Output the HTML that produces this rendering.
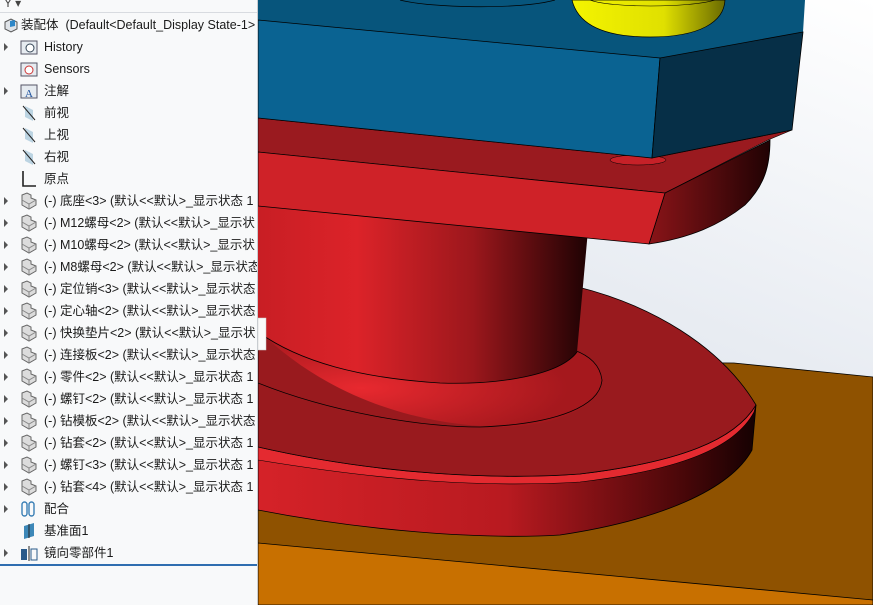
<!DOCTYPE html>
<html><head><meta charset="utf-8"><style>
*{margin:0;padding:0}
body{width:873px;height:605px;overflow:hidden;position:relative;background:#fff;font-family:"Liberation Sans","Noto Sans CJK SC",sans-serif}
#panel{position:absolute;left:0;top:0;width:257px;height:605px;background:#f8f9fa;overflow:hidden;border-right:1px solid #c8ccd0}
.row{position:absolute;left:0;height:22px;width:400px;font-size:12.5px;color:#1a1a1a;line-height:22px;white-space:nowrap}
.row .t{position:absolute;left:44px;top:0}
.row .a{position:absolute;left:4px;top:7px;width:0;height:0;border-top:4px solid transparent;border-bottom:4px solid transparent;border-left:4px solid #555}
.row svg{position:absolute;left:20px;top:2px}
#view{position:absolute;left:258px;top:0}
</style></head><body>
<div id="panel">
<div style="position:absolute;left:4px;top:-4px;font-size:12px;color:#444">Y ▾</div>
<div style="position:absolute;left:0;top:12px;width:257px;height:1px;background:#d8dbe0"></div>
<div class="row" style="top:14px"><svg width="18" height="18" style="left:2px"><path d="M3 6 L9 3 L15 6 L15 13 L9 16 L3 13Z" fill="#dfe3e8" stroke="#555"/><path d="M8 5 L13 4 L13 10 L8 11Z" fill="#2e87c8"/></svg><span class="t" style="left:21px">装配体&nbsp; (Default&lt;Default_Display State-1&gt;</span></div>

<div class="row" style="top:36px"><i class="a"></i><svg width="18" height="18"><rect x="1" y="3" width="16" height="13" fill="#e6ebf0" stroke="#556"/><circle cx="10" cy="10" r="4" fill="#fff" stroke="#345"/></svg><span class="t">History</span></div>
<div class="row" style="top:58px"><svg width="18" height="18"><rect x="1" y="3" width="16" height="13" fill="#e6ebf0" stroke="#556"/><circle cx="9" cy="10" r="4" fill="#fff" stroke="#c33"/></svg><span class="t">Sensors</span></div>
<div class="row" style="top:80px"><i class="a"></i><svg width="18" height="18"><rect x="1" y="3" width="16" height="13" fill="#e6ebf0" stroke="#556"/><text x="5" y="15" font-size="11" fill="#1b4f9c" font-family="Liberation Serif">A</text></svg><span class="t">注解</span></div>
<div class="row" style="top:102px"><svg width="18" height="18"><path d="M5 2 L13 6 L13 17 L5 13Z" fill="#bcd4e2"/><path d="M3 2 L15 16" stroke="#222"/></svg><span class="t">前视</span></div>
<div class="row" style="top:124px"><svg width="18" height="18"><path d="M5 2 L13 6 L13 17 L5 13Z" fill="#bcd4e2"/><path d="M3 2 L15 16" stroke="#222"/></svg><span class="t">上视</span></div>
<div class="row" style="top:146px"><svg width="18" height="18"><path d="M5 2 L13 6 L13 17 L5 13Z" fill="#bcd4e2"/><path d="M3 2 L15 16" stroke="#222"/></svg><span class="t">右视</span></div>
<div class="row" style="top:168px"><svg width="18" height="18"><path d="M3 1 L3 16 L16 16" stroke="#222" stroke-width="1.6" fill="none"/></svg><span class="t">原点</span></div>

<div class="row" style="top:190px"><i class="a"></i><svg width="18" height="18"><path d="M2 8 L2 13 L9 17 L16 13 L16 8 L11 6 L11 3 L7 1 L2 3Z" fill="#dcdcdc" stroke="#666"/><path d="M2 8 L9 12 L16 8 M9 12 L9 17" fill="none" stroke="#888"/></svg><span class="t">(-) 底座&lt;3&gt; (默认&lt;&lt;默认&gt;_显示状态 1</span></div>
<div class="row" style="top:212px"><i class="a"></i><svg width="18" height="18"><path d="M2 8 L2 13 L9 17 L16 13 L16 8 L11 6 L11 3 L7 1 L2 3Z" fill="#dcdcdc" stroke="#666"/><path d="M2 8 L9 12 L16 8 M9 12 L9 17" fill="none" stroke="#888"/></svg><span class="t">(-) M12螺母&lt;2&gt; (默认&lt;&lt;默认&gt;_显示状</span></div>
<div class="row" style="top:234px"><i class="a"></i><svg width="18" height="18"><path d="M2 8 L2 13 L9 17 L16 13 L16 8 L11 6 L11 3 L7 1 L2 3Z" fill="#dcdcdc" stroke="#666"/><path d="M2 8 L9 12 L16 8 M9 12 L9 17" fill="none" stroke="#888"/></svg><span class="t">(-) M10螺母&lt;2&gt; (默认&lt;&lt;默认&gt;_显示状</span></div>
<div class="row" style="top:256px"><i class="a"></i><svg width="18" height="18"><path d="M2 8 L2 13 L9 17 L16 13 L16 8 L11 6 L11 3 L7 1 L2 3Z" fill="#dcdcdc" stroke="#666"/><path d="M2 8 L9 12 L16 8 M9 12 L9 17" fill="none" stroke="#888"/></svg><span class="t">(-) M8螺母&lt;2&gt; (默认&lt;&lt;默认&gt;_显示状态</span></div>
<div class="row" style="top:278px"><i class="a"></i><svg width="18" height="18"><path d="M2 8 L2 13 L9 17 L16 13 L16 8 L11 6 L11 3 L7 1 L2 3Z" fill="#dcdcdc" stroke="#666"/><path d="M2 8 L9 12 L16 8 M9 12 L9 17" fill="none" stroke="#888"/></svg><span class="t">(-) 定位销&lt;3&gt; (默认&lt;&lt;默认&gt;_显示状态</span></div>
<div class="row" style="top:300px"><i class="a"></i><svg width="18" height="18"><path d="M2 8 L2 13 L9 17 L16 13 L16 8 L11 6 L11 3 L7 1 L2 3Z" fill="#dcdcdc" stroke="#666"/><path d="M2 8 L9 12 L16 8 M9 12 L9 17" fill="none" stroke="#888"/></svg><span class="t">(-) 定心轴&lt;2&gt; (默认&lt;&lt;默认&gt;_显示状态</span></div>
<div class="row" style="top:322px"><i class="a"></i><svg width="18" height="18"><path d="M2 8 L2 13 L9 17 L16 13 L16 8 L11 6 L11 3 L7 1 L2 3Z" fill="#dcdcdc" stroke="#666"/><path d="M2 8 L9 12 L16 8 M9 12 L9 17" fill="none" stroke="#888"/></svg><span class="t">(-) 快换垫片&lt;2&gt; (默认&lt;&lt;默认&gt;_显示状</span></div>
<div class="row" style="top:344px"><i class="a"></i><svg width="18" height="18"><path d="M2 8 L2 13 L9 17 L16 13 L16 8 L11 6 L11 3 L7 1 L2 3Z" fill="#dcdcdc" stroke="#666"/><path d="M2 8 L9 12 L16 8 M9 12 L9 17" fill="none" stroke="#888"/></svg><span class="t">(-) 连接板&lt;2&gt; (默认&lt;&lt;默认&gt;_显示状态</span></div>
<div class="row" style="top:366px"><i class="a"></i><svg width="18" height="18"><path d="M2 8 L2 13 L9 17 L16 13 L16 8 L11 6 L11 3 L7 1 L2 3Z" fill="#dcdcdc" stroke="#666"/><path d="M2 8 L9 12 L16 8 M9 12 L9 17" fill="none" stroke="#888"/></svg><span class="t">(-) 零件&lt;2&gt; (默认&lt;&lt;默认&gt;_显示状态 1</span></div>
<div class="row" style="top:388px"><i class="a"></i><svg width="18" height="18"><path d="M2 8 L2 13 L9 17 L16 13 L16 8 L11 6 L11 3 L7 1 L2 3Z" fill="#dcdcdc" stroke="#666"/><path d="M2 8 L9 12 L16 8 M9 12 L9 17" fill="none" stroke="#888"/></svg><span class="t">(-) 螺钉&lt;2&gt; (默认&lt;&lt;默认&gt;_显示状态 1</span></div>
<div class="row" style="top:410px"><i class="a"></i><svg width="18" height="18"><path d="M2 8 L2 13 L9 17 L16 13 L16 8 L11 6 L11 3 L7 1 L2 3Z" fill="#dcdcdc" stroke="#666"/><path d="M2 8 L9 12 L16 8 M9 12 L9 17" fill="none" stroke="#888"/></svg><span class="t">(-) 钻模板&lt;2&gt; (默认&lt;&lt;默认&gt;_显示状态</span></div>
<div class="row" style="top:432px"><i class="a"></i><svg width="18" height="18"><path d="M2 8 L2 13 L9 17 L16 13 L16 8 L11 6 L11 3 L7 1 L2 3Z" fill="#dcdcdc" stroke="#666"/><path d="M2 8 L9 12 L16 8 M9 12 L9 17" fill="none" stroke="#888"/></svg><span class="t">(-) 钻套&lt;2&gt; (默认&lt;&lt;默认&gt;_显示状态 1</span></div>
<div class="row" style="top:454px"><i class="a"></i><svg width="18" height="18"><path d="M2 8 L2 13 L9 17 L16 13 L16 8 L11 6 L11 3 L7 1 L2 3Z" fill="#dcdcdc" stroke="#666"/><path d="M2 8 L9 12 L16 8 M9 12 L9 17" fill="none" stroke="#888"/></svg><span class="t">(-) 螺钉&lt;3&gt; (默认&lt;&lt;默认&gt;_显示状态 1</span></div>
<div class="row" style="top:476px"><i class="a"></i><svg width="18" height="18"><path d="M2 8 L2 13 L9 17 L16 13 L16 8 L11 6 L11 3 L7 1 L2 3Z" fill="#dcdcdc" stroke="#666"/><path d="M2 8 L9 12 L16 8 M9 12 L9 17" fill="none" stroke="#888"/></svg><span class="t">(-) 钻套&lt;4&gt; (默认&lt;&lt;默认&gt;_显示状态 1</span></div>
<div class="row" style="top:498px"><i class="a"></i><svg width="18" height="18"><rect x="2" y="2" width="5" height="14" rx="2.5" fill="none" stroke="#3a7fb5" stroke-width="1.4"/><rect x="9" y="2" width="5" height="14" rx="2.5" fill="none" stroke="#3a7fb5" stroke-width="1.4"/></svg><span class="t">配合</span></div>
<div class="row" style="top:520px"><svg width="18" height="18"><path d="M4 4 L14 1 L14 14 L4 17Z" fill="#3d88b8"/><path d="M9 2 L9 16" stroke="#222"/></svg><span class="t">基准面1</span></div>
<div class="row" style="top:542px"><i class="a"></i><svg width="20" height="18"><rect x="1" y="5" width="6" height="11" fill="#2a5a8a"/><path d="M9 2 L9 17" stroke="#222"/><rect x="11" y="5" width="6" height="11" fill="none" stroke="#2a5a8a"/></svg><span class="t">镜向零部件1</span></div>
<div style="position:absolute;left:0;top:564px;width:257px;height:2px;background:#2f6db0"></div>
</div>

<svg id="view" width="615" height="605" viewBox="258 0 615 605">
<defs>
<linearGradient id="bg" x1="1" y1="0" x2="0.6" y2="1"><stop offset="0" stop-color="#ffffff"/><stop offset="1" stop-color="#d6dde8"/></linearGradient>
<linearGradient id="cyl" x1="0" x2="1"><stop offset="0" stop-color="#c81e24"/><stop offset="0.3" stop-color="#dc2329"/><stop offset="0.65" stop-color="#9c171c"/><stop offset="1" stop-color="#1e0203"/></linearGradient>
<linearGradient id="rim" x1="0" x2="1"><stop offset="0" stop-color="#d52228"/><stop offset="0.5" stop-color="#b81a20"/><stop offset="0.85" stop-color="#4a0709"/><stop offset="1" stop-color="#150102"/></linearGradient>
<linearGradient id="plR" x1="0" x2="1"><stop offset="0" stop-color="#8a1418"/><stop offset="1" stop-color="#200203"/></linearGradient>
<linearGradient id="yel" x1="0" x2="1"><stop offset="0" stop-color="#f4f400"/><stop offset="0.6" stop-color="#e0e000"/><stop offset="1" stop-color="#6a6a00"/></linearGradient>
<radialGradient id="hl" cx="0.3" cy="0.6" r="0.6"><stop offset="0" stop-color="#e8292f"/><stop offset="1" stop-color="#a5181d"/></radialGradient>
</defs>
<rect x="258" y="0" width="615" height="605" fill="url(#bg)"/>
<path d="M258 360 L734 363 L873 377 L873 605 L258 605Z" fill="#8f5200" stroke="#000" stroke-width="0.8"/>
<path d="M258 543 L873 600 L873 605 L258 605Z" fill="#c87000" stroke="#000" stroke-width="0.8"/>
<path d="M258 447 C380 475 500 480 580 474 C680 462 735 440 756 405 L752 450 C730 490 660 520 560 535 C480 540 360 530 258 510Z" fill="url(#rim)" stroke="#000" stroke-width="0.8"/>
<path d="M258 447 C380 475 500 480 580 474 C680 462 735 440 756 405 L754 412 C735 448 680 470 580 482 C480 488 380 480 258 460Z" fill="#e42a30" stroke="#000" stroke-width="0.6"/>
<path d="M258 295 L578 287 C650 305 720 345 756 405 C735 440 680 462 580 474 C500 480 380 475 258 447Z" fill="#991a1e" stroke="#000" stroke-width="0.8"/>
<path d="M258 330 C330 400 420 425 500 427 C560 426 600 405 602 380 C600 365 590 356 574 350 L258 330Z" fill="url(#hl)"/>
<path d="M258 383 C330 412 420 427 480 427 C560 424 600 405 602 380 C600 365 590 356 574 350" fill="none" stroke="#000" stroke-width="0.8"/>
<path d="M258 200 L588 230 L577 352 C560 375 500 385 440 383 C360 378 300 362 258 332Z" fill="url(#cyl)"/>
<path d="M258 332 C300 362 360 378 440 383 C500 385 560 375 577 352" fill="none" stroke="#000" stroke-width="0.8"/>
<path d="M258 118 L652 158 L792 130 L768 140 L665 193 L258 152Z" fill="#9a1a1f" stroke="#000" stroke-width="0.6"/>
<path d="M665 193 L770 140 C770 165 765 185 745 205 C720 225 690 238 649 244Z" fill="url(#plR)" stroke="#000" stroke-width="0.8"/>
<path d="M258 152 L665 193 L649 244 L258 206Z" fill="#cf2228" stroke="#000" stroke-width="0.8"/>
<ellipse cx="638" cy="160" rx="28" ry="5" fill="#c62128" stroke="#000" stroke-width="0.5"/>
<path d="M258 0 L805 0 L803 32 L660 58 L258 20Z" fill="#07557c"/>
<path d="M258 20 L660 58 L652 158 L258 118Z" fill="#0a6392" stroke="#000" stroke-width="0.8"/>
<path d="M660 58 L803 32 L792 130 L652 158Z" fill="#062f47" stroke="#000" stroke-width="0.8"/>
<path d="M400 0 C430 8 520 10 555 0" fill="none" stroke="#000" stroke-width="0.7"/>
<path d="M572 0 L725 0 C724 22 700 37 650 37 C605 37 578 25 572 0Z" fill="url(#yel)" stroke="#000" stroke-width="0.7"/>
<path d="M590 0 C610 8 690 8 715 0" fill="none" stroke="#000" stroke-width="0.6"/>
<rect x="258" y="318" width="8" height="32" fill="#fafafa" stroke="#ccc" stroke-width="0.5"/>
</svg>
</body></html>
